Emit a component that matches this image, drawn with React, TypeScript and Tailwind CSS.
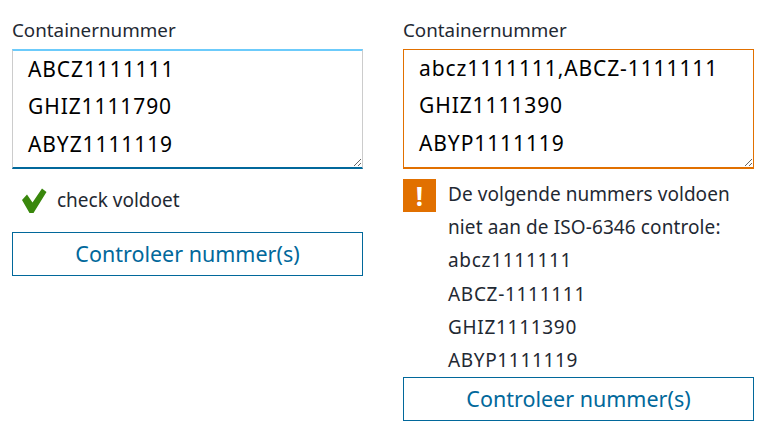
const font = "font-['Noto_Sans','Open_Sans',sans-serif]";

function CheckIcon() {
  return (
    <svg className="w-[26px] h-[26px] shrink-0" viewBox="0 0 26 26">
      <path d="M0 13 L5 7.5 L10.5 15.5 L20 1.5 L24.5 5 L11.5 26 L7.5 26 Z" fill="#39870c" />
    </svg>
  );
}

function Field({ value, tone }: { value: string; tone: 'ok' | 'error' }) {
  const border =
    tone === 'ok'
      ? 'border-t-2 border-t-[#6ccbfb] border-x border-x-[#cccccc] border-b-2 border-b-[#01689b]'
      : 'border border-[#e17000] border-b-2';
  return (
    <div>
      <label className="block text-[18.8px] leading-[24px] text-[#1f2933] h-[24px] mt-[18px] mb-[7px]">Containernummer</label>
      <textarea
        readOnly
        value={value}
        className={`block w-full h-[120px] pl-[15px] pr-2 pt-0 text-[21px] leading-[37.4px] tracking-[0.9px] text-black bg-white outline-none resize-y ${border} ${font}`}
      />
    </div>
  );
}

function SubmitButton() {
  return (
    <button className="block w-full h-[44px] border border-[#01689b] bg-white text-[21.5px] text-[#01689b]">
      Controleer nummer(s)
    </button>
  );
}

export default function App() {
  return (
    <div className={`w-[777px] h-[441px] bg-white overflow-hidden flex gap-10 pl-3 ${font}`}>
      <div className="w-[351px]">
        <Field tone="ok" value={'ABCZ1111111\nGHIZ1111790\nABYZ1111119'} />
        <div className="flex items-center h-[26px] mt-[18px] pl-[10px] gap-[9px] text-[19px] text-[#1f2933]">
          <CheckIcon />
          <span>check voldoet</span>
        </div>
        <div className="mt-[19px]">
          <SubmitButton />
        </div>
      </div>
      <div className="w-[351px]">
        <Field tone="error" value={'abcz1111111,ABCZ-1111111\nGHIZ1111390\nABYP1111119'} />
        <div className="flex gap-[12px] mt-[10px]">
          <div className="w-[33px] h-[33px] bg-[#e17000] flex items-center justify-center shrink-0 text-white text-[26px] font-bold leading-none">
            !
          </div>
          <div className="text-[19px] leading-[33.2px] text-[#1f2933] -mt-[1px]">
            <div className="tracking-[0.05px]">De volgende nummers voldoen</div>
            <div className="tracking-[0.1px]">niet aan de ISO-6346 controle:</div>
            <div className="tracking-[0.7px]">abcz1111111</div>
            <div className="tracking-[0.7px]">ABCZ-1111111</div>
            <div className="tracking-[0.7px]">GHIZ1111390</div>
            <div className="tracking-[0.65px]">ABYP1111119</div>
          </div>
        </div>
        <SubmitButton />
      </div>
    </div>
  );
}
